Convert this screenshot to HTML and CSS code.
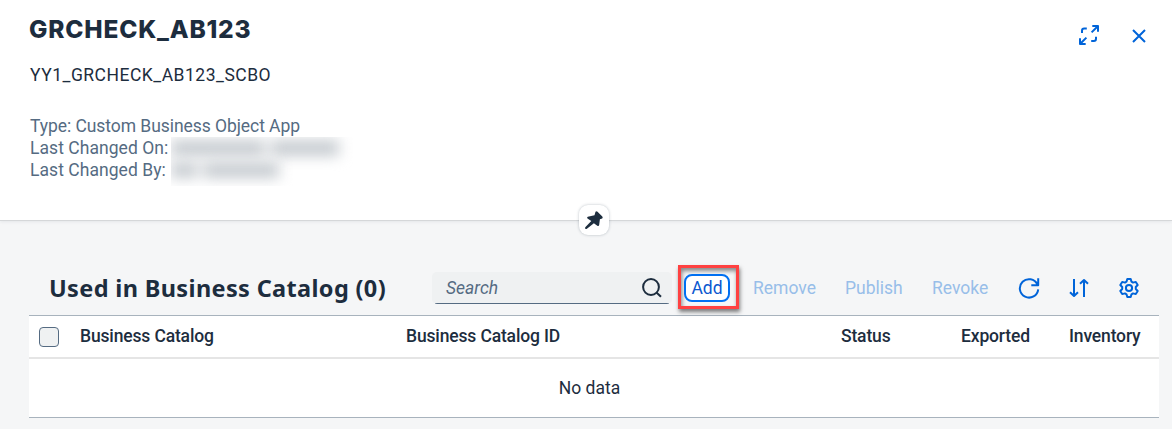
FILE: index.html
```html
<!DOCTYPE html>
<html lang="en">
<head>
<meta charset="utf-8">
<title>GRCHECK_AB123</title>
<link rel="stylesheet" href="styles.css">
</head>
<body>
<header class="page-header">
  <div class="header-info">
    <h1 class="title">GRCHECK_AB123</h1>
    <p class="subtitle">YY1_GRCHECK_AB123_SCBO</p>
    <div class="facts">
      <div class="fact fact-type">Type: Custom Business Object App</div>
      <div class="fact fact-on">Last Changed On:</div>
      <div class="fact fact-by">Last Changed By:</div>
      <div class="redacted"><div class="smudge smudge-a"><i class="w1"></i><i class="w2"></i></div><div class="smudge smudge-b"><i class="w3"></i><i class="w4"></i></div></div>
    </div>
  </div>
  <div class="header-actions">
    <svg class="icon-full" width="22" height="22" viewBox="0 0 22 22"><path d="M4 9V6.700Q4 4.500 6.200 4.500H8.800M18 12.700V14.800Q18 17 15.800 17H13.200"/><path d="M13.600 8.400L20 2M14.300 2H20V7.700M8.400 13.600L2 20M2 14.300V20H7.700"/></svg>
    <svg class="icon-close" width="14" height="14" viewBox="0 0 14 14"><path d="M1 1L13 13M13 1L1 13"/></svg>
  </div>
  <div class="pin"><svg width="20" height="20" viewBox="0 0 20 20"><path d="M11.500 1.700Q12.500 .7 13.500 1.700L18.300 6.600Q19.200 7.700 18.200 8.400L15.900 9.300L15.200 14.800Q14.800 16.700 13.300 15.700L9.900 13.300L2.900 18.700Q1.700 19.300 1.200 18.400Q.8 17.700 1.500 17L7.300 11.100L3.500 8.500Q2.500 7.300 3.800 6.700L10.500 5.300Z"/></svg></div>
</header>
<main class="content">
  <div class="toolbar">
    <h2 class="section-title">Used in Business Catalog (0)</h2>
    <div class="search"><span class="placeholder">Search</span><svg width="20" height="20" viewBox="0 0 20 20"><circle cx="9" cy="9" r="7.900"/><path d="M14.700 14.700L19 18.800"/></svg></div>
    <div class="callout"><button class="button-add">Add</button></div>
    <span class="action remove">Remove</span>
    <span class="action publish">Publish</span>
    <span class="action revoke">Revoke</span>
    <svg class="tool" width="22" height="22" viewBox="0 0 22 22"><path d="M20.200 12.300A9.200 9.200 0 1 1 19.400 7.500M20.200 1.200V8.200H13.300"/></svg>
    <svg class="tool sort" width="20" height="20" viewBox="0 0 20 20"><path d="M5 1V18M1 14.200L5 18L9 14.200M15 19V2M11 5.800L15 2L19 5.800"/></svg>
    <svg class="tool gear" width="20" height="20" viewBox="0 0 20 20"><circle cx="10" cy="10" r="3.100"/><path d="M8.300 1H11.700L12.500 3.700L14 4.600L16.800 3.900L18.700 7L16.800 9V11L18.700 13L16.800 16.100L14 15.400L12.500 16.300L11.700 19H8.300L7.500 16.300L6 15.400L3.200 16.100L1.300 13L3.200 11V9L1.300 7L3.200 3.900L6 4.600L7.500 3.700Z"/></svg>
  </div>
  <div class="table">
    <div class="table-head">
      <span class="checkbox"></span>
      <span class="th th-catalog">Business Catalog</span>
      <span class="th th-id">Business Catalog ID</span>
      <span class="th th-status">Status</span>
      <span class="th th-exported">Exported</span>
      <span class="th th-inventory">Inventory</span>
    </div>
    <div class="empty"><span>No data</span></div>
  </div>
</main>
</body>
</html>
```
FILE: styles.css
```css
* { box-sizing: border-box; }
body { margin: 0; height: 429px; overflow: hidden; background: #f5f6f7; color: #1d2d3e; font: 17.5px/22px Roboto, sans-serif; }
h1, h2, p { margin: 0; }
svg { fill: none; stroke: #0064d9; stroke-width: 2; stroke-linejoin: round; flex: none; }
span, button, .fact { white-space: nowrap; }
.page-header { position: relative; display: flex; justify-content: space-between; height: 221px; padding: 13px 26px 0 30px; background: #fff; border-bottom: 1px solid #d5d7d9; box-shadow: 0 1px 3px rgba(34, 53, 72, .08); }
.title { margin-left: -1px; font: 800 24.5px/32px Inter, sans-serif; letter-spacing: .8px; }
.subtitle { margin-top: 19px; letter-spacing: .5px; }
.facts { position: relative; margin-top: 29px; color: #556b82; }
.fact-type { letter-spacing: -.06px; }
.fact-on, .fact-by { letter-spacing: .05px; }
.redacted { position: absolute; left: 141px; top: 22px; width: 184px; height: 49px; overflow: hidden; background: #fff; }
.smudge { display: flex; gap: 6px; height: 16px; margin-top: 3px; filter: blur(7px); }
.smudge-b { margin-top: 6px; }
.smudge i { background: #c6cbd0; }
.w1 { width: 94px; }
.w2 { width: 68px; }
.w3 { width: 26px; }
.w4 { width: 76px; }
.header-actions { display: flex; gap: 32px; height: 22px; margin-top: 11px; align-items: center; }
.header-actions .icon-close { margin-top: 1px; }
.pin { position: absolute; left: 579px; top: 205px; width: 30px; height: 30px; padding: 5px; border-radius: 9px; background: #fff; box-shadow: 0 0 3px rgba(34, 53, 72, .3); }
.pin svg { display: block; fill: #1d2d3e; stroke: none; }
.content { padding: 44px 13px 0 29px; }
.toolbar { display: flex; align-items: center; height: 44px; padding-left: 20px; }
.section-title { flex: none; width: 383px; padding-top: 2px; font: 700 23.500px/32px "Noto Sans", sans-serif; letter-spacing: .35px; white-space: nowrap; }
.search { flex: none; display: flex; align-items: center; justify-content: space-between; width: 240px; height: 32px; margin-top: 1px; padding: 0 10px 0 14px; border-radius: 5px; background: linear-gradient(#556b82, #556b82) 50% 100% / 234px 1px no-repeat #eff1f2; }
.placeholder { color: #556b82; font-style: italic; }
.search svg { stroke: #1d2d3e; }
.callout { flex: none; width: 61px; height: 44px; margin-left: 6px; padding: 6px 0 0 3px; border: 3px solid #ff4141; box-shadow: 1px 3px 4px rgba(0, 0, 0, .5), inset 1px 3px 4px rgba(0, 0, 0, .45); }
.button-add { display: block; width: 46px; height: 28px; padding: 0; border: 2px solid #0070f2; border-radius: 8px; background: #fff; color: #0b57d0; font: inherit; line-height: 24px; }
.action { flex: none; padding-top: 2px; color: #98bee9; }
.remove { width: 92px; margin-left: 14px; }
.publish { width: 87px; }
.revoke { width: 86px; }
.tool { margin-top: 2px; }
.tool.sort { margin-left: 29px; }
.tool.gear { margin-left: 30px; }
.table { background: #fff; border-top: 1px solid #a8b3bd; border-bottom: 1px solid #a8b3bd; margin-top: 6px; }
.table-head { display: grid; grid-template-columns: 51px 326px 435px 120px 108px 1fr; align-items: center; height: 43px; border-bottom: 2px solid #e5e5e5; font-weight: 500; }
.th { padding-bottom: 2px; letter-spacing: -.15px; }
.checkbox { width: 20px; height: 20px; margin: 1px 0 0 10px; border: 1px solid #556b82; border-radius: 4px; background: #eff1f2; }
.empty { display: flex; align-items: center; justify-content: center; height: 58px; padding-right: 9px; }
```
